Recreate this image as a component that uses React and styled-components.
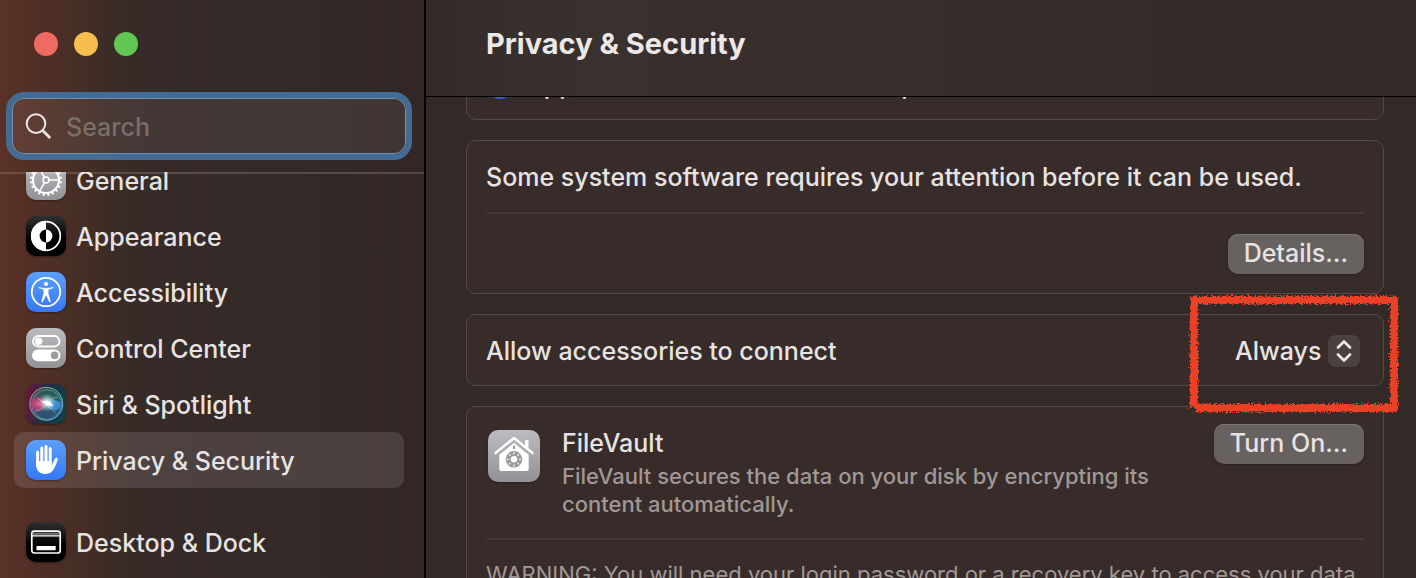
import styled, { createGlobalStyle } from "styled-components";

const GlobalStyle = createGlobalStyle`
  * {
    box-sizing: border-box;
  }
  body {
    margin: 0;
    background-color: #332927;
    color: #e6e3e2;
    font-family: Inter, "Liberation Sans", sans-serif;
    font-size: 25px;
    font-weight: 500;
    line-height: 32px;
  }
  button, input, select {
    font: inherit;
    color: inherit;
  }
`;

const Window = styled.div`
  display: flex;
  height: 100vh;
  overflow: hidden;
`;
const Sidebar = styled.aside`
  flex: 0 0 426px;
  min-width: 0;
  display: flex;
  flex-direction: column;
  border-right: 2px solid #000;
  background: linear-gradient(90deg, #5a3126 0, #553026 20px, #482e25 70px, #3b2c26 110px, #362b28 150px, #332927 300px, #322725 100%);
`;
const TrafficLights = styled.div`
  display: flex;
  gap: 16px;
  padding: 32px 34px 36px;
`;
const Light = styled.button`
  width: 24px;
  height: 24px;
  padding: 0;
  border: 0;
  border-radius: 50%;
  background-color: ${({ $color }) => $color};
`;
const SearchBox = styled.label`
  display: flex;
  align-items: center;
  gap: 14px;
  height: 68px;
  margin: 0 12px 12px 6px;
  padding: 0 12px;
  border: 6px solid #446b93;
  border-radius: 18px;
  background-color: rgba(255, 235, 235, 0.07);
  background-clip: padding-box;
  box-shadow: inset 0 0 0 1px #6f90ae;
  svg {
    flex: none;
  }
`;
const SearchInput = styled.input`
  flex: 1;
  min-width: 0;
  padding: 2px 0 0;
  border: 0;
  outline: 0;
  background: transparent;
  &::placeholder {
    color: #7b6d69;
    opacity: 1;
  }
`;
const SidebarScroll = styled.nav`
  position: relative;
  flex: 1;
  min-height: 0;
  overflow: hidden;
  padding: 0 20px 0 14px;
  /* translucent hairline over the scrolled list */
  &::after {
    content: "";
    position: absolute;
    top: 0;
    left: 0;
    right: 0;
    height: 2px;
    background-color: rgba(255, 240, 235, 0.16);
  }
`;
const NavList = styled.ul`
  margin: -20px 0 0;
  padding: 0;
  list-style: none;
`;
const NavItem = styled.li`
  margin-top: ${({ $separated }) => ($separated ? "26px" : "0")};
`;
const NavLink = styled.a`
  display: flex;
  align-items: center;
  gap: 10px;
  height: 56px;
  padding: 0 12px;
  border-radius: 10px;
  color: inherit;
  text-decoration: none;
  background-color: ${({ $active }) => ($active ? "rgba(255, 240, 235, 0.12)" : "transparent")};
`;
const NavLabel = styled.span`
  padding-top: 2px;
`;
const IconTile = styled.span`
  display: block;
  flex: none;
  width: ${({ $size }) => $size || 40}px;
  height: ${({ $size }) => $size || 40}px;
  border-radius: 10px;
  overflow: hidden;
  background: ${({ $bg }) => $bg};
  box-shadow: 0 1px 2px rgba(0, 0, 0, 0.35);
  svg {
    display: block;
    width: 100%;
    height: 100%;
  }
`;
const Main = styled.main`
  flex: 1;
  min-width: 0;
  display: flex;
  flex-direction: column;
`;
const Header = styled.header`
  flex: none;
  height: 97px;
  padding: 24px 60px;
  border-bottom: 1px solid #000;
  background: linear-gradient(90deg, #352a2a 0, #37302d 110px, #38322e 200px, #382e2c 260px, #37302d 400px, #362d2b 600px, #352b29 100%);
`;
const Title = styled.h1`
  margin: 0;
  font-size: 29px;
  line-height: 40px;
  font-weight: 700;
  color: #ebe8e7;
`;
const Content = styled.div`
  flex: 1;
  min-height: 0;
  overflow: hidden;
  display: flex;
  flex-direction: column;
  gap: 20px;
  padding: 0 32px 0 40px;
`;
const Card = styled.section`
  flex: none;
  padding: 0 19px;
  border: 1px solid #544a48;
  border-radius: 10px;
  background-color: #372c2a;
`;
/* card that is already scrolled under the header */
const ScrolledCard = styled(Card)`
  margin-top: -41px;
`;
const AccessoriesCard = styled(Card)`
  position: relative;
  z-index: 1;
`;
const RadioRow = styled.label`
  display: flex;
  align-items: center;
  gap: 12px;
  height: 62px;
  padding: 0 0 6px;
`;
const Radio = styled.input`
  appearance: none;
  width: 28px;
  height: 28px;
  margin: 0;
  border: 9px solid #2c60dc;
  border-radius: 50%;
  background-color: #fff;
`;
const Row = styled.div`
  display: flex;
  align-items: center;
  justify-content: space-between;
  height: ${({ $tall }) => ($tall ? "71px" : "70px")};
`;
const Actions = styled.div`
  display: flex;
  justify-content: flex-end;
  padding: 20px 0 19px;
  border-top: 2px solid #413735;
`;
const PushButton = styled.button`
  flex: none;
  height: 40px;
  padding: 0 16px 2px;
  border: 0;
  border-radius: 10px;
  background-color: #676160;
  box-shadow: inset 0 1px 0 #7d7776, 0 1px 2px rgba(0, 0, 0, 0.3);
`;
const PopUp = styled.span`
  display: flex;
  align-items: center;
  gap: 6px;
  padding: 2px 4px 0 0;
`;
const PopUpLabel = styled.label`
  padding-top: 2px;
`;
const PopUpSelect = styled.select`
  appearance: none;
  padding: 0;
  border: 0;
  background: transparent;
`;
const Chevrons = styled.span`
  display: flex;
  width: 32px;
  height: 32px;
  border-radius: 8px;
  background-color: #4b4140;
`;
const Highlight = styled.svg`
  position: absolute;
  top: -24px;
  right: -20px;
  pointer-events: none;
`;
const VaultRow = styled.div`
  display: flex;
  align-items: flex-start;
  padding: 17px 0 20px;
`;
const VaultIcon = styled.div`
  padding: 6px 22px 0 2px;
`;
const VaultText = styled.div`
  flex: 1;
  padding-top: 3px;
`;
const VaultName = styled.h2`
  margin: 0 0 3px;
  font-size: 25px;
  line-height: 32px;
  font-weight: 500;
`;
const Note = styled.p`
  max-width: 620px;
  margin: 0;
  font-size: 22px;
  line-height: 28px;
  color: #a09896;
`;
const Warning = styled(Note)`
  max-width: none;
  padding: 20px 0;
  border-top: 2px solid #413735;
  font-weight: 400;
`;

const GREY = "linear-gradient(#bcbbc0, #929196)";
const BLACK = "linear-gradient(#303030, #000 60%)";
const BLUE = "linear-gradient(#5b9ff8, #3678f5)";

const teeth = Array.from({ length: 20 }, (_, i) => i * 18);

const GearIcon = () => (
  <svg viewBox="0 0 40 40" fill="none" stroke="#fff">
    <circle cx="20" cy="20" r="13" strokeWidth="2" />
    {teeth.map((a) => (
      <path key={a} d="M20 7V4" strokeWidth="2" transform={`rotate(${a + 9} 20 20)`} />
    ))}
    <circle cx="20" cy="20" r="3" strokeWidth="1.6" />
    <path d="M23 20h10M18.5 17.4l-5-8.7M18.5 22.6l-5 8.7" strokeWidth="1.6" />
  </svg>
);
const AppearanceIcon = () => (
  <svg viewBox="0 0 40 40">
    <circle cx="20" cy="20" r="14.3" fill="none" stroke="#fff" strokeWidth="1.7" />
    <path d="M20 5a15 15 0 0 0 0 30z" fill="#fff" />
    <path d="M20 13.6a6.4 6.4 0 0 0 0 12.8z" fill="#000" />
    <path d="M20 13.6a6.4 6.4 0 0 1 0 12.8z" fill="#fff" />
  </svg>
);
const AccessibilityIcon = () => (
  <svg viewBox="0 0 40 40">
    <circle cx="20" cy="20" r="14.2" fill="none" stroke="#fff" strokeWidth="1.8" />
    <circle cx="20" cy="12" r="2" fill="#fff" />
    <path d="M12.8 15.2l5.6 1h3.2l5.6-1v.9l-4.9 1.3v4l2.3 8.3-1.3.4L20.3 23.5h-.6l-3 6.6-1.3-.4 2.3-8.3v-4l-4.900-1.300z" fill="#fff" stroke="#fff" strokeWidth=".3" strokeLinejoin="round" />
  </svg>
);
const ControlIcon = () => (
  <svg viewBox="0 0 40 40">
    <rect x="7" y="8" width="26.5" height="10.5" rx="5.2" fill="none" stroke="#fff" strokeWidth="1.8" />
    <circle cx="12.6" cy="13.2" r="3.8" fill="#fff" />
    <rect x="6" y="21.6" width="28.4" height="11.6" rx="5.8" fill="#fff" />
    <circle cx="28.6" cy="27.4" r="3.8" fill="#9d9ca0" />
  </svg>
);
const SiriIcon = () => (
  <svg viewBox="0 0 40 40">
    <defs>
      <linearGradient id="siriBack" x1="0" y1="0" x2="1" y2="0.2">
        <stop offset="0" stopColor="#72153a" />
        <stop offset=".45" stopColor="#2a2a40" />
        <stop offset="1" stopColor="#123d49" />
      </linearGradient>
      <linearGradient id="siriRing" x1="0" y1="0.3" x2="1" y2="0.7">
        <stop offset="0" stopColor="#d96d92" />
        <stop offset=".5" stopColor="#67c69c" />
        <stop offset="1" stopColor="#5ca9e6" />
      </linearGradient>
      <linearGradient id="siriOrb" x1="0" y1="0" x2="0" y2="1">
        <stop offset="0" stopColor="#1f6b53" />
        <stop offset=".5" stopColor="#4a7c83" />
        <stop offset="1" stopColor="#2b5796" />
      </linearGradient>
      <radialGradient id="siriGlow">
        <stop offset="0" stopColor="#fff" />
        <stop offset=".3" stopColor="#e4f5f7" stopOpacity=".8" />
        <stop offset="1" stopColor="#a5dad6" stopOpacity="0" />
      </radialGradient>
      <radialGradient id="siriPink">
        <stop offset="0" stopColor="#ea5e91" />
        <stop offset="1" stopColor="#d22c6c" stopOpacity=".55" />
      </radialGradient>
    </defs>
    <rect width="40" height="40" fill="url(#siriBack)" />
    <circle cx="20.3" cy="19.8" r="16.5" fill="url(#siriOrb)" fillOpacity=".65" stroke="url(#siriRing)" />
    <circle cx="20.8" cy="20.5" r="14.8" fill="none" stroke="url(#siriRing)" strokeWidth=".6" />
    <ellipse cx="12.5" cy="20" rx="7.3" ry="7.2" fill="url(#siriPink)" />
    <path d="M20 22c3-7 11-8 14.5-2C34 28 25 28 20 22z" fill="#3c97df" fillOpacity=".85" />
    <path d="M9 27c6-1 9-3 12-7s6-6 11-7M11 14c7 4 12 9 19 15" fill="none" stroke="#bcecf0" strokeWidth=".7" strokeOpacity=".6" />
    <circle cx="21" cy="18.5" r="9" fill="url(#siriGlow)" />
    <path d="M15 17l9 1 3.5 4.5-7-1.5z" fill="#fff" />
  </svg>
);
const HandIcon = () => (
  <svg viewBox="0 0 40 40" fill="none" stroke="#fff" strokeLinecap="round" strokeLinejoin="round">
    <path d="M11.6 12v13M15.8 8v14M20 6.6V22M24.2 8.4V22" strokeWidth="3" />
    <path d="M10.1 21h15.6v4.2l3.2-6.5c.8-1.8 3.2-1.1 2.8.7-1 3.4-2 6-3.2 8.4C26.5 32 23.7 34 19.4 34c-5.9 0-9.3-3.5-9.3-9.5z" fill="#fff" stroke="none" />
  </svg>
);
const DockIcon = () => (
  <svg viewBox="0 0 40 40">
    <rect x="5.8" y="9.2" width="28.4" height="21.8" rx="2.5" fill="none" stroke="#fff" strokeWidth="1.7" />
    <path d="M6.5 11.7h27" stroke="#777" strokeWidth="2" />
    <path d="M6 13.9h28" stroke="#fff" strokeWidth="1.2" />
    <rect x="10.5" y="24" width="19.2" height="4.2" rx=".6" fill="#fff" />
  </svg>
);
const VaultHouseIcon = () => (
  <svg viewBox="0 0 52 52">
    <path d="M37 10.2h3.5v9.5L37 17z" fill="#fff" />
    <path d="M7.5 23L26 8l18.5 15" fill="none" stroke="#fff" strokeWidth="2.4" strokeLinecap="round" strokeLinejoin="round" />
    <path d="M11.3 24.8L26 13l14.7 11.8v14.1a2 2 0 0 1-2 2H13.3a2 2 0 0 1-2-2z" fill="#fff" />
    <circle cx="26" cy="29.3" r="8.3" fill="#9b9a9e" />
    <path d="M26 15.5v3.5" stroke="#9b9a9e" strokeWidth="2" />
    {[0, 45, 90, 135, 180, 225, 270, 315].map((a) => (
      <path key={a} d="M26 24.2V22.2" stroke="#fff" strokeWidth="1.2" transform={`rotate(${a} 26 29.3)`} />
    ))}
    <circle cx="26" cy="29.3" r="3.2" fill="#fff" />
  </svg>
);

const navItems = [
  { name: "General", bg: GREY, Icon: GearIcon },
  { name: "Appearance", bg: BLACK, Icon: AppearanceIcon },
  { name: "Accessibility", bg: BLUE, Icon: AccessibilityIcon },
  { name: "Control Center", bg: GREY, Icon: ControlIcon },
  { name: "Siri & Spotlight", bg: "#222", Icon: SiriIcon },
  { name: "Privacy & Security", bg: BLUE, Icon: HandIcon, active: true },
  { name: "Desktop & Dock", bg: BLACK, Icon: DockIcon, separated: true },
];

const App = () => {
  return (
    <Window>
      <GlobalStyle />
      <Sidebar>
        <TrafficLights>
          <Light $color="#ed6b60" aria-label="Close" />
          <Light $color="#f5be4f" aria-label="Minimize" />
          <Light $color="#62c655" aria-label="Zoom" />
        </TrafficLights>
        <SearchBox>
          <svg width="28" height="28" viewBox="0 0 28 28" fill="none" stroke="#ebe6e4" strokeLinecap="round">
            <circle cx="12" cy="11.6" r="9.3" strokeWidth="2" />
            <path d="M19 18.8l6.4 6.4" strokeWidth="2.8" />
          </svg>
          <SearchInput type="text" placeholder="Search" aria-label="Search" />
        </SearchBox>
        <SidebarScroll>
          <NavList>
            {navItems.map(({ name, bg, Icon, active, separated }) => (
              <NavItem key={name} $separated={separated}>
                <NavLink href="#" $active={active}>
                  <IconTile $bg={bg}>
                    <Icon />
                  </IconTile>
                  <NavLabel>{name}</NavLabel>
                </NavLink>
              </NavItem>
            ))}
          </NavList>
        </SidebarScroll>
      </Sidebar>
      <Main>
        <Header>
          <Title>Privacy &amp; Security</Title>
        </Header>
        <Content>
          <ScrolledCard>
            <RadioRow>
              <Radio type="radio" name="source" defaultChecked />
              App Store and identified developers
            </RadioRow>
          </ScrolledCard>
          <Card>
            <Row $tall>Some system software requires your attention before it can be used.</Row>
            <Actions>
              <PushButton>Details…</PushButton>
            </Actions>
          </Card>
          <AccessoriesCard>
            <Row>
              <PopUpLabel htmlFor="accessories">Allow accessories to connect</PopUpLabel>
              <PopUp>
                <PopUpSelect id="accessories">
                  <option>Always</option>
                </PopUpSelect>
                <Chevrons>
                  <svg width="32" height="32" viewBox="0 0 32 32" fill="none" stroke="#ebe6e4" strokeWidth="2.8" strokeLinecap="round" strokeLinejoin="round">
                    <path d="M10 12.4l6-6 6 6M10 19.6l6 6 6-6" />
                  </svg>
                </Chevrons>
              </PopUp>
            </Row>
            <Highlight width="218" height="126" viewBox="0 0 218 126" fill="none">
              <filter id="crayon" x="-5%" y="-5%" width="110%" height="110%">
                <feTurbulence type="fractalNoise" baseFrequency="0.6" numOctaves="2" seed="4" />
                <feDisplacementMap in="SourceGraphic" scale="7" xChannelSelector="R" yChannelSelector="G" />
              </filter>
              <path d="M5 9H213M209 5V120M213 117H11M9 5V116" stroke="#ea4025" strokeWidth="8" filter="url(#crayon)" />
            </Highlight>
          </AccessoriesCard>
          <Card>
            <VaultRow>
              <VaultIcon>
                <IconTile $bg={GREY} $size={52}>
                  <VaultHouseIcon />
                </IconTile>
              </VaultIcon>
              <VaultText>
                <VaultName>FileVault</VaultName>
                <Note>FileVault secures the data on your disk by encrypting its content automatically.</Note>
              </VaultText>
              <PushButton>Turn On…</PushButton>
            </VaultRow>
            <Warning>
              WARNING: You will need your login password or a recovery key to access your data.
            </Warning>
          </Card>
        </Content>
      </Main>
    </Window>
  );
};

export default App;
